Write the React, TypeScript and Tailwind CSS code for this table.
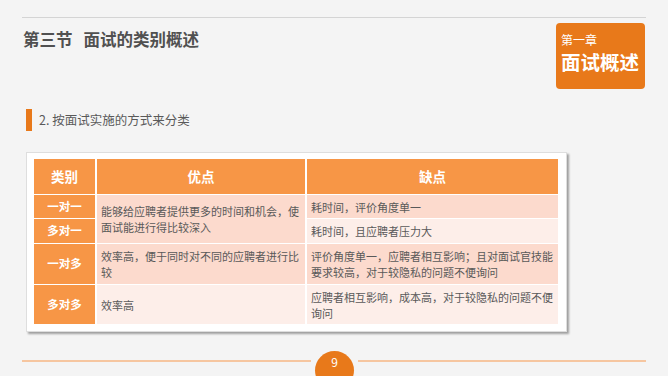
const font = { fontFamily: '"Noto Sans CJK SC", "Noto Sans", sans-serif' };

type Row = { type: string; cons: string; tone: "dark" | "light" };

const rows: Row[] = [
  { type: "一对一", cons: "耗时间，评价角度单一", tone: "dark" },
  { type: "多对一", cons: "耗时间，且应聘者压力大", tone: "light" },
  { type: "一对多", cons: "评价角度单一，应聘者相互影响；且对面试官技能要求较高，对于较隐私的问题不便询问", tone: "dark" },
  { type: "多对多", cons: "应聘者相互影响，成本高，对于较隐私的问题不便询问", tone: "light" },
];

function TypeCell({ label }: { label: string }) {
  return (
    <div className="bg-[#f79646] flex items-center justify-center text-white font-bold text-[11.5px]">
      {label}
    </div>
  );
}

function TextCell({ children, tone, className = "" }: { children: React.ReactNode; tone: "dark" | "light"; className?: string }) {
  return (
    <div
      className={`flex items-center px-[4px] text-[11px] leading-[16px] text-[#595959] ${
        tone === "dark" ? "bg-[#fcdacd]" : "bg-[#fdeee9]"
      } ${className}`}
    >
      <p>{children}</p>
    </div>
  );
}

export default function App() {
  return (
    <div className="w-[668px] h-[376px] bg-[#f4f4f4] overflow-hidden flex flex-col" style={font}>
      {/* header */}
      <div className="mt-[17px] mx-[22px] border-t-[1.5px] border-[#d4d4d4] flex items-start justify-between">
        <h1 className="mt-[10px] ml-[1px] text-[16.5px] font-bold text-[#505050] leading-[22px] flex gap-[11px]">
          <span>第三节</span>
          <span>面试的类别概述</span>
        </h1>
        <div className="mt-[5px] mr-[1px] w-[89px] h-[66px] bg-[#e8791a] rounded-[4px] pl-[5px] pt-[8px] text-white">
          <p className="text-[12px] leading-[17px]">第一章</p>
          <p className="mt-[2px] text-[19.5px] leading-[24px] font-bold">面试概述</p>
        </div>
      </div>

      {/* subtitle */}
      <div className="mt-[20px] ml-[26px] flex items-center gap-[7px]">
        <div className="w-[6px] h-[22px] bg-[#e8791a]" />
        <p className="text-[12.5px] text-[#595959]">2. 按面试实施的方式来分类</p>
      </div>

      {/* table card */}
      <div className="mt-[21px] ml-[26px] w-[541px] bg-white border border-[#dedede] shadow-[2px_2px_2px_rgba(0,0,0,0.35)] pt-[6px] pl-[7px] pb-[7px]">
        <div className="grid grid-cols-[61px_208px_251px] grid-rows-[35px_23px_24px_40px_39px] gap-x-[2px] gap-y-[1px]">
          <div className="bg-[#f79646] flex items-center justify-center text-white font-bold text-[13.5px]">类别</div>
          <div className="bg-[#f79646] flex items-center justify-center text-white font-bold text-[13.5px]">优点</div>
          <div className="bg-[#f79646] flex items-center justify-center text-white font-bold text-[13.5px]">缺点</div>

          <TypeCell label={rows[0].type} />
          <TextCell tone="dark" className="row-span-2">
            能够给应聘者提供更多的时间和机会，使面试能进行得比较深入
          </TextCell>
          <TextCell tone={rows[0].tone}>{rows[0].cons}</TextCell>

          <TypeCell label={rows[1].type} />
          <TextCell tone={rows[1].tone}>{rows[1].cons}</TextCell>

          <TypeCell label={rows[2].type} />
          <TextCell tone="dark">效率高，便于同时对不同的应聘者进行比较</TextCell>
          <TextCell tone={rows[2].tone}>{rows[2].cons}</TextCell>

          <TypeCell label={rows[3].type} />
          <TextCell tone="light">效率高</TextCell>
          <TextCell tone={rows[3].tone}>{rows[3].cons}</TextCell>
        </div>
      </div>

      {/* footer */}
      <div className="mt-[19px] mx-[22px] flex items-start gap-[4px]">
        <div className="flex-1 mt-[9px] h-[1.5px] bg-[#f6c6a0]" />
        <div className="w-[39px] h-[39px] rounded-full bg-[#e8791a] flex justify-center pt-[3px]">
          <span className="text-white text-[12px] leading-[16px]">9</span>
        </div>
        <div className="w-[288px] mt-[9px] h-[1.5px] bg-[#f6c6a0]" />
      </div>
    </div>
  );
}
